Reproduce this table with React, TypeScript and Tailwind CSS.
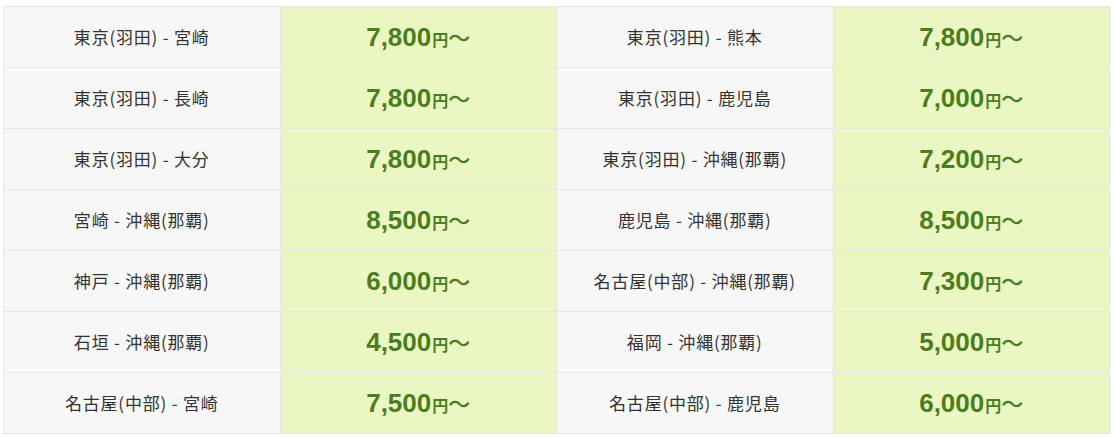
const rows: [string, string, string, string][] = [
  ["東京(羽田) - 宮崎", "7,800", "東京(羽田) - 熊本", "7,800"],
  ["東京(羽田) - 長崎", "7,800", "東京(羽田) - 鹿児島", "7,000"],
  ["東京(羽田) - 大分", "7,800", "東京(羽田) - 沖縄(那覇)", "7,200"],
  ["宮崎 - 沖縄(那覇)", "8,500", "鹿児島 - 沖縄(那覇)", "8,500"],
  ["神戸 - 沖縄(那覇)", "6,000", "名古屋(中部) - 沖縄(那覇)", "7,300"],
  ["石垣 - 沖縄(那覇)", "4,500", "福岡 - 沖縄(那覇)", "5,000"],
  ["名古屋(中部) - 宮崎", "7,500", "名古屋(中部) - 鹿児島", "6,000"],
];

function Route({ name }: { name: string }) {
  return (
    <div className="flex h-[61px] items-center justify-center border-r border-b border-[#e6e6e6] bg-[#f7f7f7] text-[17px] tracking-[0.8px] text-[#333]">
      {name}
    </div>
  );
}

function Price({ value }: { value: string }) {
  return (
    <div className="flex h-[61px] items-center justify-center border-r border-b border-[#e6e6e6] bg-[#ebf7c2] text-[#4b7d1e]">
      <div className="flex items-baseline">
        <span className="font-['Liberation_Sans',sans-serif] text-[26px] font-bold">{value}</span>
        <span className="ml-[1px] font-['Noto_Sans_CJK_JP',sans-serif] text-[16px] font-bold">円</span>
        <span className="font-['Noto_Sans_CJK_JP',sans-serif] text-[22px] font-medium leading-none">〜</span>
      </div>
    </div>
  );
}

export default function App() {
  return (
    <div className="min-h-screen bg-white pt-[6px] pl-[3px] font-['Noto_Sans_CJK_JP',sans-serif]">
      <div className="grid w-[1107px] grid-cols-4 border-t border-l border-[#e6e6e6]">
        {rows.map((r, i) => (
          <div key={i} className="contents">
            <Route name={r[0]} />
            <Price value={r[1]} />
            <Route name={r[2]} />
            <Price value={r[3]} />
          </div>
        ))}
      </div>
    </div>
  );
}
